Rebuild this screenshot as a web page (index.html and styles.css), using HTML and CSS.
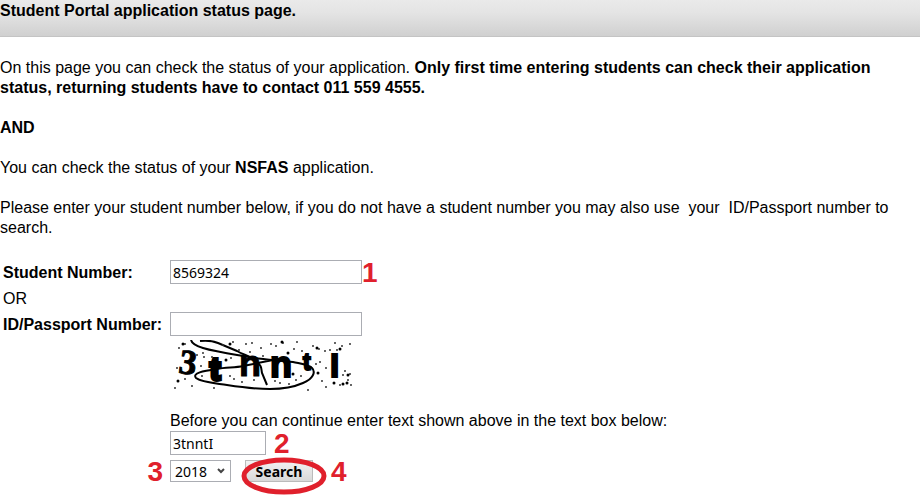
FILE: index.html
```
<!DOCTYPE html>
<html lang="en">
<head>
    <meta charset="UTF-8">
    <title>Student Portal application status</title>
    <link rel="stylesheet" href="styles.css">
</head>
<body>
<h1>Student Portal application status page.</h1>
<main>
    <p>On this page you can check the status of your application. <b>Only first time entering students can check their application status, returning students have to contact 011 559 4555.</b></p>
    <p><b>AND</b></p>
    <p>You can check the status of your <b>NSFAS</b> application.</p>
    <p>Please enter your student number below, if you do not have a student number you may also use&nbsp; your&nbsp; ID/Passport number to search.</p>

    <form>
        <label class="name" for="student">Student Number:</label>
        <div class="field">
            <input id="student" type="text" value="8569324">
            <span class="step">1</span>
        </div>

        <div class="or">OR</div>

        <label class="name" for="passport">ID/Passport Number:</label>
        <div class="field">
            <input id="passport" type="text">
        </div>

        <div class="verify">
            <svg class="captcha" viewBox="0 0 188 52" role="img" aria-label="Verification text">
                <g class="letters">
                    <text class="serif" x="9" y="34" font-size="35" transform="rotate(8 18 25)">3</text>
                    <text x="40" y="40" font-size="31" stroke-width="4">t</text>
                    <text x="69" y="36" font-size="36">n</text>
                    <text x="100" y="37" font-size="36" stroke-width="2">n</text>
                    <text x="133" y="30" font-size="23" stroke-width="2">t</text>
                    <text x="160" y="37" font-size="33" stroke-width="2">I</text>
                </g>
                <g class="strokes">
                    <path d="M21 0C22 4 26 6 33 8C46 12 62 14 80 17C94 20 110 20 123 22C132 24 140 25 142 28C146 32 143 39 133 43C124 47 113 49 100 49C84 49 70 47 57 45C44 43 31 42 26 38C22 33 33 31 47 29C56 27 65 28 73 26L103 20"/>
                    <path d="M30 1C39 0 43 1 48 3L67 11C74 15 82 17 87 22C92 26 91 28 92 33L97 45"/>
                </g>
                <path class="specks" d="M9 8h0M15 4h0M27 15h0M33 13h0M34 17h0M42 17h0M53 5h0M61 18h0M63 2h0M69 10h0M76 4h0M82 3h0M80 12h0M91 8h0M101 4h0M106 6h0M113 3h0M124 9h0M127 2h0M132 11h0M143 6h0M149 9h0M155 11h0M160 10h0M165 3h0M167 10h0M172 6h0M180 4h0M7 28h0M5 48h0M15 39h0M22 46h0M31 26h0M32 36h0M44 48h0M60 36h0M64 39h0M72 42h0M84 40h0M93 16h0M105 41h0M110 43h0M119 44h0M126 40h0M131 36h0M146 24h0M150 22h0M152 41h0M156 47h0M156 28h0M175 31h0M173 35h0M178 40h0M180 34h0M181 45h0M170 45h0M138 50h0"/>
                <path class="specks big" d="M8 41h0M60 4h0M56 20h0M118 13h0M112 2h0M147 8h0M178 35h0M177 43h0M164 43h0M173 44h0M170 9h0M23 31h0M148 33h0M123 34h0M13 4h0"/>
            </svg>
            <label for="code">Before you can continue enter text shown above in the text box below:</label>
            <div class="field">
                <input id="code" class="short" type="text" value="3tnntI">
                <span class="step">2</span>
            </div>
        </div>

        <span class="step before">3</span>
        <div class="field actions">
            <select aria-label="Year">
                <option>2018</option>
            </select>
            <div class="search">
                <button type="button">Search</button>
                <svg class="ring" viewBox="0 0 86 38">
                    <ellipse cx="43" cy="19" rx="40" ry="16"/>
                </svg>
            </div>
            <span class="step">4</span>
        </div>
    </form>
</main>
</body>
</html>
```
FILE: styles.css
```
body {
    margin: 0;
    background: #fff;
    color: #000;
    font: 16px/20px "Liberation Sans", Arial, sans-serif;
}

h1 {
    margin: 0;
    padding: 1px 0 15px;
    border-bottom: 1px solid #c4c4c4;
    background: linear-gradient(#eaeaea, #e4e4e4 35%, #d0d0d0);
    font-size: 16px;
    line-height: 20px;
}

main {
    padding: 21px 0 10px;
}

p {
    margin: 0 0 20px;
}

form {
    display: grid;
    grid-template-columns: 165px 1fr;
    column-gap: 2px;
    align-items: center;
    padding: 2px 0 0 3px;
}

.name {
    padding-top: 2px;
    font-weight: bold;
    white-space: nowrap;
}

.field {
    display: flex;
    align-items: center;
    height: 24px;
}

input {
    box-sizing: border-box;
    width: 192px;
    height: 24px;
    padding: 0 2px;
    border: 1px solid #abadb3;
    background: #fff;
    color: #000;
    font: 14px "Noto Sans", sans-serif;
}

.short {
    width: 96px;
}

.or {
    grid-column: 1 / -1;
    padding: 5px 0 3px;
}

.verify {
    grid-column: 2;
}

.verify label {
    display: block;
}

.verify .step {
    margin-left: 8px;
}

.captcha {
    display: block;
    width: 188px;
    height: 52px;
    margin: 4px 0 19px;
}

.letters {
    font-family: "Liberation Sans", Arial, sans-serif;
    font-weight: bold;
    stroke: #000;
}

.serif {
    font-family: "Liberation Serif", serif;
}

.strokes {
    fill: none;
    stroke: #000;
    stroke-width: 2;
}

.specks {
    stroke: #333;
    stroke-width: 2;
    stroke-linecap: round;
}

.big {
    stroke: #000;
    stroke-width: 3;
}

.step {
    padding-top: 2px;
    color: #e0202c;
    font-size: 28px;
    font-weight: bold;
    line-height: 24px;
}

.before {
    justify-self: end;
    margin-right: 5px;
}

.actions {
    height: 32px;
}

select {
    appearance: none;
    box-sizing: border-box;
    width: 61px;
    height: 22px;
    padding: 0 4px;
    border: 1px solid #abadb3;
    border-radius: 0;
    background: #fff url("data:image/svg+xml,%3Csvg xmlns='http://www.w3.org/2000/svg' width='8' height='6'%3E%3Cpath d='M1 1l3 3 3-3' fill='none' stroke='%23444' stroke-width='2'/%3E%3C/svg%3E") no-repeat right 5px center;
    color: #000;
    font: 14px "Noto Sans", sans-serif;
}

.search {
    position: relative;
    margin: 0 18px 0 14px;
}

button {
    display: block;
    box-sizing: border-box;
    width: 68px;
    height: 22px;
    padding: 0;
    border: 1px solid #bbb;
    background: linear-gradient(#f2f2f2, #d8d8d8);
    color: #000;
    font: bold 14px "Noto Sans", sans-serif;
}

/* red marker drawn round the button */
.ring {
    position: absolute;
    top: -3px;
    left: -4px;
    width: 86px;
    height: 38px;
    fill: none;
    stroke: #e0202c;
    stroke-width: 5;
    pointer-events: none;
}
```
